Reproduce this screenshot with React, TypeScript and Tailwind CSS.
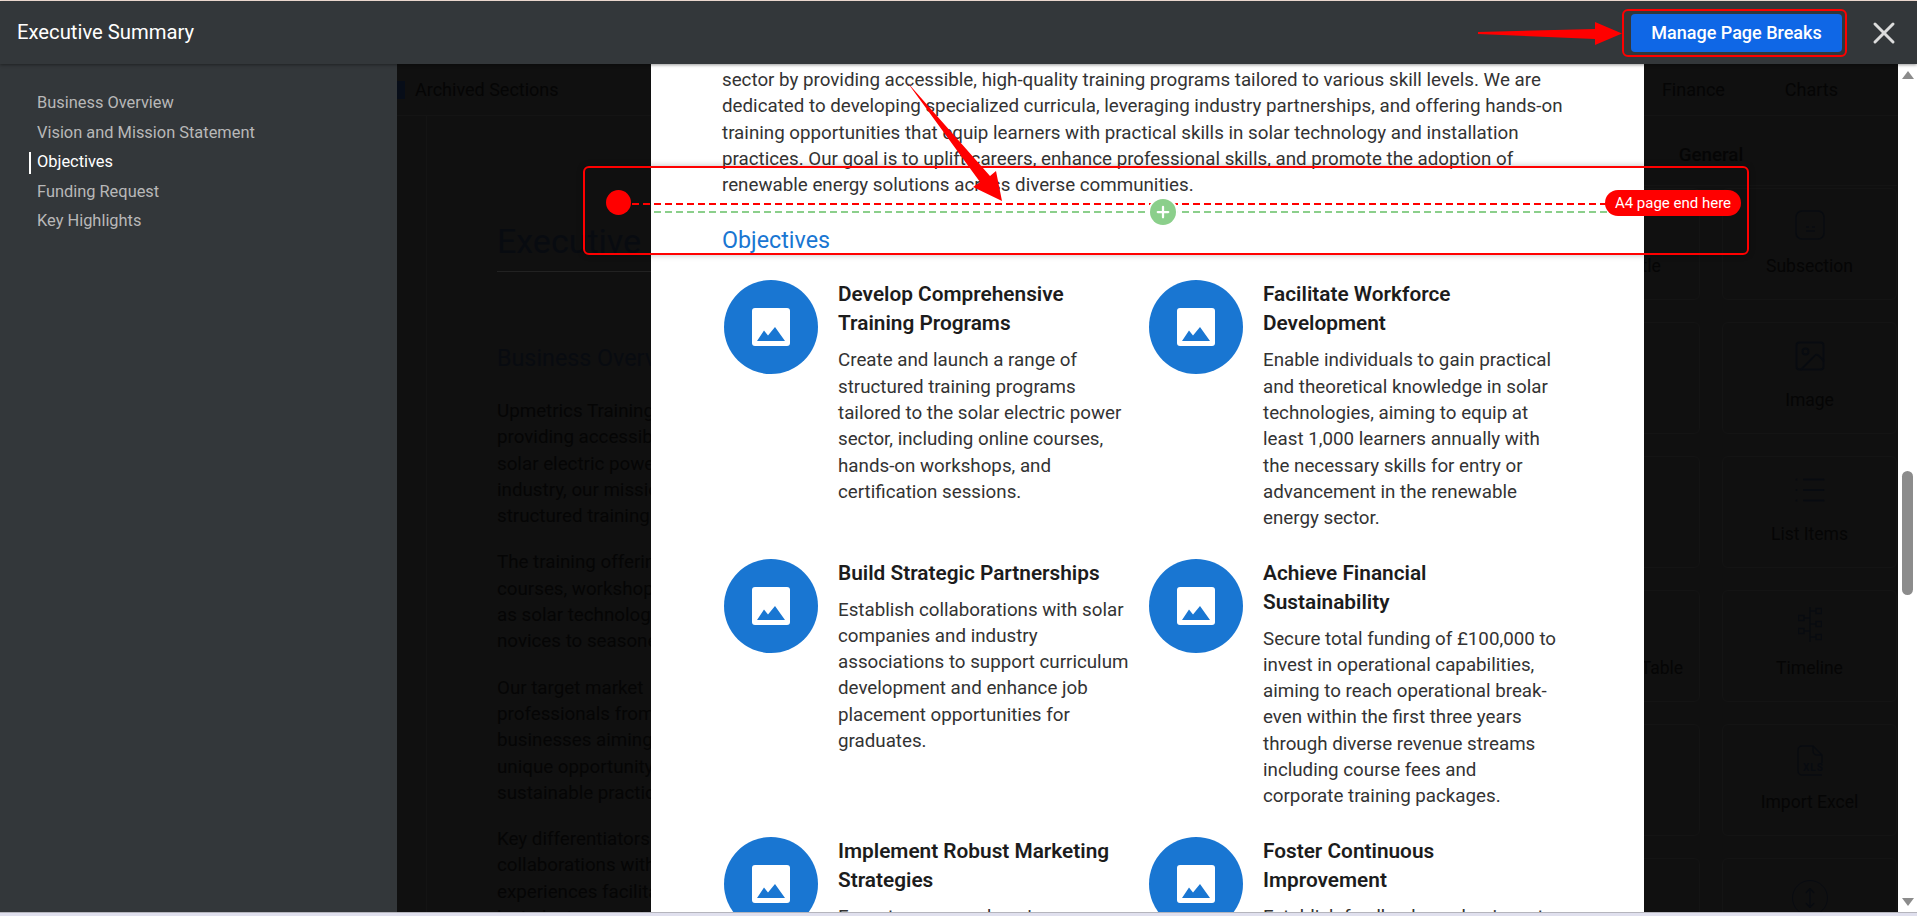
import { Image, List, MoveVertical, X, Plus } from "lucide-react";

const sections = ["Business Overview", "Vision and Mission Statement", "Objectives", "Funding Request", "Key Highlights"];

const objectives = [
    {
        title: "Develop Comprehensive Training Programs",
        body: "Create and launch a range of structured training programs tailored to the solar electric power sector, including online courses, hands-on workshops, and certification sessions.",
    },
    {
        title: "Facilitate Workforce Development",
        body: "Enable individuals to gain practical and theoretical knowledge in solar technologies, aiming to equip at least 1,000 learners annually with the necessary skills for entry or advancement in the renewable energy sector.",
    },
    {
        title: "Build Strategic Partnerships",
        body: "Establish collaborations with solar companies and industry associations to support curriculum development and enhance job placement opportunities for graduates.",
    },
    {
        title: "Achieve Financial Sustainability",
        body: "Secure total funding of £100,000 to invest in operational capabilities, aiming to reach operational break-even within the first three years through diverse revenue streams including course fees and corporate training packages.",
    },
    {
        title: "Implement Robust Marketing Strategies",
        body: "Execute a comprehensive marketing plan to build awareness of our training programs.",
    },
    {
        title: "Foster Continuous Improvement",
        body: "Establish feedback mechanisms to refine our courses.",
    },
];

const backgroundParagraphs = [
    ["Upmetrics Training", "providing accessible", "solar electric power", "industry, our mission", "structured training"],
    ["The training offering", "courses, workshops", "as solar technology", "novices to seasoned"],
    ["Our target market", "professionals from", "businesses aiming", "unique opportunity", "sustainable practices"],
    ["Key differentiators", "collaborations with", "experiences facilitated", "by industry experts"],
];

function SubsectionIcon() {
    return (
        <svg width="30" height="30" viewBox="0 0 30 30" fill="none" stroke="#080b10" strokeWidth="1.5">
            <rect x="1" y="1" width="28" height="28" rx="6" />
            <path d="M11 17h3M17 17h3M11 21h9" />
        </svg>
    );
}

function TimelineIcon() {
    return (
        <svg width="24" height="35" viewBox="0 0 24 35" fill="none" stroke="#080b10" strokeWidth="1.3">
            <path d="M12 0v35M12 4h6M12 17h6M12 30h6M6 11h6M6 24h6" />
            <rect x="18" y="1.5" width="5.5" height="5" />
            <rect x="18" y="14.5" width="5.5" height="5" />
            <rect x="18" y="27.5" width="5.5" height="5" />
            <rect x="0.5" y="8.5" width="5.5" height="5" />
            <rect x="0.5" y="21.5" width="5.5" height="5" />
        </svg>
    );
}

function ExcelIcon() {
    return (
        <svg width="26" height="31" viewBox="0 0 26 31" fill="none" stroke="#080b10" strokeWidth="1.3">
            <path d="M25 18V10L16 1H5a4 4 0 0 0-4 4v21a4 4 0 0 0 4 4h20" />
            <path d="M16 1v5a4 4 0 0 0 4 4h5" />
            <text x="6" y="26" fontSize="10" fontWeight="700" fontFamily="Roboto, sans-serif" letterSpacing="1" fill="#080b10" stroke="none">
                XLS
            </text>
        </svg>
    );
}

function ImageTile() {
    return (
        <svg width="38" height="38" viewBox="0 0 38 38">
            <rect width="38" height="38" rx="3" fill="#fff" />
            <path d="M5 33 L12 22.5 L16 27.5 L23 19 L33 33 Z" fill="#1976d2" />
        </svg>
    );
}

function DimCard({ label, icon }: { label: string; icon?: React.ReactNode }) {
    return (
        <div className="h-[112px] rounded-md border border-[#141414] flex flex-col items-center">
            <div className="h-[51px] flex items-end">{icon}</div>
            <div className="mt-[14px] text-[17.5px] leading-[24px] text-[#050505] whitespace-nowrap">{label}</div>
        </div>
    );
}

export default function App() {
    return (
        <div className="relative w-[1917px] h-[916px] overflow-hidden flex flex-col bg-[#101010] font-['Roboto',sans-serif]">
            <div className="h-[1px] bg-[#fbe6dc]" />
            <header className="relative z-20 h-[63px] shrink-0 bg-[#33373a] shadow-[0_1px_3px_rgba(0,0,0,0.4)] flex items-center pl-[17px] pr-[15px]">
                <h1 className="text-[20.25px] text-white">Executive Summary</h1>
                <button className="ml-auto w-[211px] h-[38px] rounded bg-[#0f67e6] text-white text-[18px] font-medium">
                    Manage Page Breaks
                </button>
                <X className="ml-[24px] h-[36px] w-[36px] text-[#dcdcdc]" strokeWidth={2} />
            </header>

            <div className="flex flex-1 min-h-0">
                <aside className="w-[397px] shrink-0 bg-[#33373a] pt-[25px]">
                    <ul className="pl-[29px]">
                        {sections.map((s) => (
                            <li key={s} className="h-[29.5px] flex items-center">
                                <span className={s === "Objectives" ? "w-[2px] h-[22px] bg-white mr-[6px]" : "w-[2px] mr-[6px]"} />
                                <span className={s === "Objectives" ? "text-[16.4px] text-white" : "text-[16.4px] text-[#b8b8b8]"}>{s}</span>
                            </li>
                        ))}
                    </ul>
                </aside>

                <main className="relative flex-1 min-w-0 overflow-hidden flex flex-col bg-[#101010]">
                    <div className="h-[52px] shrink-0 border-b border-[#141414] flex items-center text-[18px] text-[#050505]">
                        <span className="w-[8px] h-[18px] bg-[#070d18]" />
                        <span className="ml-[10px]">Archived Sections</span>
                        <span className="ml-auto mr-[60px]">Finance</span>
                        <span className="mr-[60px]">Charts</span>
                    </div>
                    <div className="flex flex-1 min-h-0">
                        <div className="w-[30px] shrink-0 border-r border-[#141414]" />
                        <div className="flex-1 pl-[70px] pt-[105px]">
                            <div className="text-[34px] leading-[40px] text-[#080b10] border-b border-[#222] pb-[10px]">Executive Summary</div>
                            <div className="mt-[72px] text-[23.3px] leading-[28px] text-[#080b10]">Business Overview</div>
                            <div className="mt-[26px] flex flex-col gap-[20px]">
                                {backgroundParagraphs.map((p) => (
                                    <div key={p[0]} className="text-[18.75px] leading-[26.3px] text-[#050505]">
                                        {p.map((l) => (
                                            <div key={l}>{l}</div>
                                        ))}
                                    </div>
                                ))}
                            </div>
                        </div>
                        <div className="w-[372px] shrink-0 mr-[1px]">
                            <div className="h-[70px] pt-[10px] border-b border-[#141414] flex items-center justify-center text-[18.75px] font-medium text-[#050505]">
                                General
                            </div>
                            <div className="grid grid-cols-[175px_175px] gap-x-[22px] gap-y-[22px] mt-[2px]">
                                <DimCard label="Section Title" />
                                <DimCard label="Subsection" icon={<SubsectionIcon />} />
                                <DimCard label="Text" />
                                <DimCard label="Image" icon={<Image className="h-[36px] w-[36px] text-[#080b10]" strokeWidth={1.25} />} />
                                <DimCard label="Bullet" />
                                <DimCard label="List Items" icon={<List className="h-[36px] w-[36px] text-[#080b10]" strokeWidth={1.25} />} />
                                <DimCard label="Comparison Table" />
                                <DimCard label="Timeline" icon={<TimelineIcon />} />
                                <DimCard label="Import" />
                                <DimCard label="Import Excel" icon={<ExcelIcon />} />
                                <DimCard label="Space" />
                                <div className="h-[112px] rounded-md border border-[#141414] flex justify-center pt-[21px]">
                                    <span className="h-[36px] w-[36px] rounded-full border-[1.5px] border-[#080b10] flex items-center justify-center">
                                        <MoveVertical className="h-[22px] w-[22px] text-[#080b10]" strokeWidth={1.5} />
                                    </span>
                                </div>
                            </div>
                        </div>
                    </div>

                    {/* document preview sits over the dimmed editor */}
                    <article className="absolute left-[254px] top-0 bottom-0 w-[993px] bg-white overflow-hidden pl-[71px] pt-[3px]">
                        <p className="w-[852px] text-[18.75px] leading-[26.3px] text-[#333]">
                            sector by providing accessible, high-quality training programs tailored to various skill levels. We are
                            dedicated to developing specialized curricula, leveraging industry partnerships, and offering hands-on
                            training opportunities that equip learners with practical skills in solar technology and installation
                            practices. Our goal is to uplift careers, enhance professional skills, and promote the adoption of
                            renewable energy solutions across diverse communities.
                        </p>
                        <h2 className="mt-[27px] text-[23.3px] leading-[30px] text-[#1976d2]">Objectives</h2>
                        <div className="mt-[25px] grid grid-cols-[425px_425px] gap-y-[27px]">
                            {objectives.map((o) => (
                                <div key={o.title} className="flex gap-[20px] pl-[2px]">
                                    <div className="w-[94px] h-[94px] shrink-0 rounded-full bg-[#1976d2] flex items-center justify-center">
                                        <ImageTile />
                                    </div>
                                    <div className="w-[296px]">
                                        <h3 className="max-w-[285px] text-[20.8px] leading-[29px] font-semibold text-[#1c1c1c]">{o.title}</h3>
                                        <p className="mt-[9px] text-[18.75px] leading-[26.3px] text-[#333]">{o.body}</p>
                                    </div>
                                </div>
                            ))}
                        </div>
                    </article>
                </main>

                <div className="relative w-[19px] shrink-0 bg-white">
                    <div className="absolute left-[4px] top-[7px] w-0 h-0 border-x-[6px] border-x-transparent border-b-[8px] border-b-[#8c8c8c]" />
                    <div className="absolute left-[4px] top-[407px] w-[11px] h-[124px] rounded-md bg-[#8c8c8c]" />
                    <div className="absolute left-[4px] top-[834px] w-0 h-0 border-x-[6px] border-x-transparent border-t-[8px] border-t-[#8c8c8c]" />
                </div>
            </div>

            <div className="relative z-20 h-[4px] shrink-0 bg-[#e0e0ee] border-t border-[#b5b5bd]" />

            {/* annotations on top of the screenshot */}
            <div className="absolute z-30 left-[583px] top-[166px] w-[1166px] h-[89px] rounded-md border-2 border-[#ff0000] shadow-[0_0_6px_rgba(0,0,0,0.25)]" />
            <div className="absolute z-30 left-[606px] top-[190px] w-[25px] h-[25px] rounded-full bg-[#ff0000]" />
            <div className="absolute z-30 left-[632px] top-[203px] w-[975px] h-[2px] bg-[repeating-linear-gradient(90deg,#ff0000_0_7px,transparent_7px_11px)]" />
            <div className="absolute z-30 left-[654px] top-[211px] w-[955px] h-[2px] bg-[repeating-linear-gradient(90deg,#8bcf8b_0_7px,transparent_7px_11px)]" />
            <div className="absolute z-30 left-[1150px] top-[199px] w-[26px] h-[26px] rounded-full bg-[#8bcf8b] ring-2 ring-white flex items-center justify-center">
                <Plus className="h-[18px] w-[18px] text-white" strokeWidth={3} />
            </div>
            <div className="absolute z-30 left-[1605px] top-[190px] w-[136px] h-[26px] rounded-full bg-[#ff0000] text-white text-[15px] flex items-center justify-center">
                A4 page end here
            </div>
            <div className="absolute z-30 left-[1622px] top-[9px] w-[225px] h-[48px] rounded-md border-2 border-[#ff0000]" />

            <svg className="absolute z-30 left-[1470px] top-[15px]" width="155" height="36" viewBox="0 0 155 36">
                <path d="M8 17 L125 14 L125 7 L152 18.5 L125 30 L125 24 L8 19 Z" fill="#ff0000" />
            </svg>
            <svg className="absolute z-30 left-[890px] top-[75px]" width="125" height="135" viewBox="0 0 125 135">
                <path d="M17 7 L90 107 L83 112 L112 126 L106 96 L100 101 Z" fill="#ff0000" />
            </svg>
        </div>
    );
}
